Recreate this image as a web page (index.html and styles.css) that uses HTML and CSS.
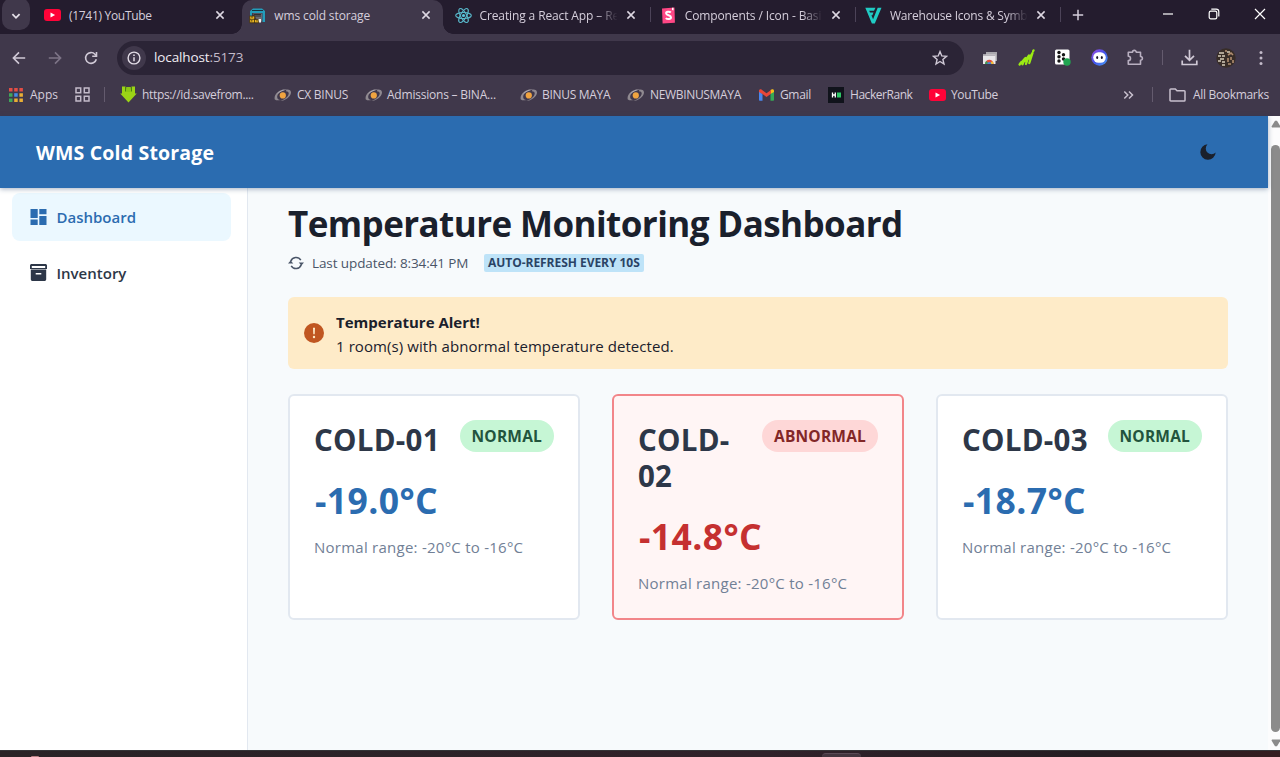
FILE: index.html
```html
<!DOCTYPE html>
<html lang="en">
<head>
<meta charset="utf-8">
<title>wms cold storage</title>
<link rel="stylesheet" href="styles.css">
</head>
<body>
<svg class="defs" width="0" height="0" aria-hidden="true">
  <symbol id="yt" viewBox="0 0 17 12"><rect width="17" height="12" rx="3" fill="#ff0338"/><path d="M6.5 3.6v4.8l4.6-2.4z" fill="#fff"/></symbol>
  <symbol id="x" viewBox="0 0 10 10"><path d="M1.4 1.4l7.2 7.2M8.6 1.4L1.4 8.6" stroke="currentColor" stroke-width="1.5" fill="none"/></symbol>
  <symbol id="binus" viewBox="0 0 18 16"><path d="M.8 12.5C-.6 8 4.5 2.5 11 2.2 7 3.5 3.5 6.500 3.200 9.500c-.2 2 1 3 3 3.600-2 .4-4.400.3-5.400-.6z" fill="#8f8990"/><path d="M12.500 2.400c3-.2 4.700 1 4.500 3.300-.4 4-5.500 8-11 8.300 4.500-1.200 8.300-4.400 8.700-7.200.2-1.600-.8-2.500-2.800-2.600z" fill="#8f8990"/><path d="M3 7.500C5 4.200 9 2.300 13 2.600c-3.500.6-7 2.300-10 4.900z" fill="#bdb8be"/><circle cx="8.800" cy="8.400" r="3.100" fill="#f0a440"/></symbol>
</svg>

<div class="browser">
  <div class="tabstrip">
    <button class="tab-search"><svg width="10" height="7" viewBox="0 0 10 7"><path d="M1.4 1.2L5 4.8l3.6-3.6" fill="none" stroke="#e4dfe8" stroke-width="1.8"/></svg></button>
    <div class="tab">
      <svg class="fav" width="17" height="12"><use href="#yt"/></svg>
      <span class="title t1">(1741) YouTube</span>
      <svg class="close" width="10" height="10"><use href="#x"/></svg>
    </div>
    <div class="tab active">
      <svg class="fav" width="17" height="17" viewBox="0 0 17 17"><path d="M1 4l3-2.5h9L16 4v11h-2.5V6H3v4H1z" fill="#239cba"/><path d="M3 3.5h11" stroke="#17343f" stroke-width="1"/><path d="M4 6.5h9v8H9z" fill="#6b6a73"/><path d="M5 7.5h7M5 9h7" stroke="#222" stroke-width=".8"/><path d="M.7 9h5v3.4h4v3.4h-9z" fill="#e7b322" stroke="#3b2c10" stroke-width=".8"/><path d="M1 12.3h5M5.5 12v4M3 9v2M2.8 13v1.6M8 13v1.5" stroke="#3b2c10" stroke-width=".8"/><path d="M9.5 12h2.5v3.5h-2z" fill="#f2f0ef"/></svg>
      <span class="title t2">wms cold storage</span>
      <svg class="close" width="10" height="10"><use href="#x"/></svg>
    </div>
    <div class="tab">
      <svg class="fav" width="17" height="17" viewBox="0 0 17 17"><g fill="none" stroke="#58b7ca" stroke-width="1.1"><ellipse cx="8.5" cy="8.5" rx="7.8" ry="3"/><ellipse cx="8.5" cy="8.5" rx="7.8" ry="3" transform="rotate(60 8.5 8.5)"/><ellipse cx="8.5" cy="8.5" rx="7.8" ry="3" transform="rotate(120 8.5 8.5)"/></g><circle cx="8.5" cy="8.5" r="1.6" fill="#58c4dc"/></svg>
      <span class="title fade t3">Creating a React App – Re</span>
      <svg class="close" width="10" height="10"><use href="#x"/></svg>
    </div>
    <div class="tab divided">
      <svg class="fav" width="17" height="17" viewBox="0 0 17 17"><path d="M2 1.5L14.5.5l.4 15.2-12.3.8z" fill="#ff4785"/><path d="M10.8 5.5C9.5 4.2 6 4.3 6.1 6.3c.1 2.4 4.9 1.4 4.9 4 0 2.3-3.8 2.2-5.2.8" fill="none" stroke="#fff" stroke-width="2"/><path d="M12 .8h1.5v2.7l-.8-.6-.7.6z" fill="#fff"/></svg>
      <span class="title fade t4">Components / Icon - Basi</span>
      <svg class="close" width="10" height="10"><use href="#x"/></svg>
    </div>
    <div class="tab divided last">
      <svg class="fav" width="17" height="17" viewBox="0 0 17 17"><path d="M.3.7h10.2L9 3.7H4.2L5 5.5h3.5L7.4 8.2h-1l1.700 4L12.700.700h3.800L9.800 16.500H6.900z" fill="#20cbc4"/></svg>
      <span class="title fade t5">Warehouse Icons &amp; Symb</span>
      <svg class="close" width="10" height="10"><use href="#x"/></svg>
    </div>
    <svg class="newtab" width="12" height="12" viewBox="0 0 12 12"><path d="M6 .8v10.4M.8 6h10.4" stroke="#d5cedb" stroke-width="1.5"/></svg>
    <div class="window-controls">
      <svg width="12" height="12" viewBox="0 0 12 12"><path d="M1 6h10" stroke="#fff" stroke-width="1.2"/></svg>
      <svg width="12" height="12" viewBox="0 0 12 12" fill="none" stroke="#fff" stroke-width="1.2"><rect x="1.2" y="3.2" width="7.6" height="7.6" rx="1.6"/><path d="M3.3 1.2h4.9a2.6 2.6 0 0 1 2.6 2.6v4.6"/></svg>
      <svg width="12" height="12" viewBox="0 0 12 12"><path d="M1 1l10 10M11 1L1 11" stroke="#fff" stroke-width="1.2"/></svg>
    </div>
  </div>

  <div class="toolbar">
    <div class="nav-buttons">
      <svg width="14" height="14" viewBox="0 0 14 14" fill="none" stroke="#d0c9d6" stroke-width="1.6"><path d="M13.2 7H1.6M7 1.4L1.4 7 7 12.6"/></svg>
      <svg width="14" height="14" viewBox="0 0 14 14" fill="none" stroke="#7d7487" stroke-width="1.6"><path d="M.8 7h11.6M7 1.4L12.6 7 7 12.6"/></svg>
      <svg width="14" height="14" viewBox="0 0 14 14" fill="none" stroke="#d0c9d6" stroke-width="1.6"><path d="M12.3 8.2A5.4 5.4 0 1 1 11 3.3l1.3 1.3"/><path d="M12.5.9v4.3H8.2"/></svg>
    </div>
    <div class="omnibox">
      <span class="site-info"><svg width="14" height="14" viewBox="0 0 14 14"><circle cx="7" cy="7" r="5.9" fill="none" stroke="#e2dce6" stroke-width="1.4"/><path d="M7 6.2v4M7 3.6v1.5" stroke="#e2dce6" stroke-width="1.5"/></svg></span>
      <span class="url">localhost<i>:5173</i></span>
      <svg class="star" width="16" height="16" viewBox="0 0 16 16"><path d="M8 1.6l1.8 4.3 4.7.4-3.6 3.1 1.1 4.6L8 11.5 4 14l1.1-4.6-3.6-3.1 4.7-.4z" fill="none" stroke="#d0c9d6" stroke-width="1.4"/></svg>
    </div>
    <div class="extensions">
      <svg width="16" height="16" viewBox="0 0 16 16"><path d="M4 2h11v9H4z" fill="#aaa8ae"/><path d="M1 4.500h12.500v9.500H1z" fill="#e9e7ea"/><path d="M1 4.500h12.500V6H1z" fill="#b8b5bb"/><path d="M3 14a4.300 4.300 0 0 1 8.600 0z" fill="#df4c3d"/><path d="M3 14a4.300 4.300 0 0 1 1.300-3L7.300 14z" fill="#3e9e57"/><path d="M11.600 14a4.300 4.300 0 0 0-1.300-3l-3 3z" fill="#f1bd35"/><path d="M5.300 14a2 2 0 0 1 4 0z" fill="#4783d9"/></svg>
      <svg width="17" height="17" viewBox="0 0 17 17" fill="none" stroke="#9bea13" stroke-width="2.300" stroke-linecap="round"><path d="M1.600 15.500l1.600-2.300M4.500 15.300l2.200-5.500M8 15l2.600-7.800M11.300 14l3.200-10M15.200 2l.3-.6M3.500 13.500l4-4.500M7.300 12L11 6.500M11 9.500L14.500 4"/></svg>
      <svg width="17" height="17" viewBox="0 0 17 17"><rect x="1" y=".5" width="14.500" height="15" rx="1.500" fill="#fff"/><g fill="#151515"><circle cx="5" cy="3.500" r="1.700"/><circle cx="5" cy="7.800" r="1.700"/><circle cx="5" cy="12" r="1.700"/><circle cx="9.500" cy="5.800" r="1.700"/><circle cx="9.500" cy="10" r="1.700"/></g><circle cx="13" cy="13" r="3.700" fill="#21a551"/></svg>
      <svg width="17" height="17" viewBox="0 0 17 17"><defs><linearGradient id="ring" x1="0" y1="0" x2="1" y2="1"><stop stop-color="#a14be0"/><stop offset=".5" stop-color="#4252ec"/><stop offset="1" stop-color="#4aa3f5"/></linearGradient></defs><circle cx="8.500" cy="8.500" r="8.200" fill="url(#ring)"/><rect x="2.200" y="3.300" width="12.600" height="10.400" rx="5.200" fill="#fff"/><ellipse cx="6.200" cy="8.500" rx="1" ry="1.600" fill="#171328"/><ellipse cx="10.800" cy="8.500" rx="1" ry="1.600" fill="#171328"/></svg>
      <svg width="17" height="17" viewBox="0 0 17 17"><path d="M1.300 3.300h4.200a1.800 1.800 0 0 1 3.800 0h4.200v4.200a1.800 1.800 0 0 1 0 3.800v4H1.300v-3.700a2.200 2.200 0 0 0 0-4.400z" fill="none" stroke="#b9b0c1" stroke-width="1.600" stroke-linejoin="round"/></svg>
      <span class="rule ext-rule"></span>
      <svg width="17" height="17" viewBox="0 0 17 17" fill="none" stroke="#d0c9d6" stroke-width="1.700"><path d="M8.500.8v10M4 6.800l4.500 4.500L13 6.800M1.200 11.500v4h14.600v-4"/></svg>
      <svg class="avatar" width="20" height="20" viewBox="0 0 20 20"><circle cx="10" cy="10" r="9.700" fill="#382d28"/><path d="M3 5h5M11 4h3M2 8h3M6 8h3M4 11h4M2 13h3M6 14h3M6 17h3" stroke="#d5cbb9" stroke-width="1.500"/><path d="M12 7l3-2 2 2M12 10v4M15 9v3M17 12v3M12 16h3M10 2v2" fill="none" stroke="#b18e70" stroke-width="1.600"/></svg>
      <svg class="menu" width="4" height="16" viewBox="0 0 4 16" fill="#c3bbca"><circle cx="2" cy="2.500" r="1.500"/><circle cx="2" cy="8" r="1.500"/><circle cx="2" cy="13.500" r="1.500"/></svg>
    </div>
  </div>

  <div class="bookmarks">
    <svg width="14" height="14" viewBox="0 0 14 14"><path d="M0 0h3.500v3.500H0zM5.200 0h3.500v3.500H5.200zM10.400 0h3.500v3.500h-3.500z" fill="#e34e45"/><path d="M0 5.200h3.500v3.500H0zM0 10.400h3.500v3.500H0z" fill="#3fa65b"/><path d="M5.200 5.200h3.500v3.500H5.200z" fill="#458ce8"/><path d="M10.400 5.200h3.500v3.500h-3.500zM5.200 10.400h3.500v3.500H5.200zM10.400 10.400h3.500v3.500h-3.500z" fill="#e9ae35"/></svg>
    <span class="b-text k1">Apps</span>
    <svg class="b-grid" width="15" height="15" viewBox="0 0 15 15" fill="none" stroke="#c3bbca" stroke-width="1.500"><path d="M1 1h4.700v4.700H1zM9.300 1H14v4.700H9.300zM1 9.300h4.700V14H1zM9.300 9.300H14V14H9.300z"/></svg>
    <span class="rule b-rule"></span>
    <svg class="b-save" width="17" height="17" viewBox="0 0 17 17"><path d="M2 .5h3.500v2h6v-2H15v7h1.800L8.500 16.500.2 7.500H2z" fill="#9bd416"/><path d="M5.600 1v4.500M11.400 1v4.500" stroke="#4a7f12" stroke-width="1.200"/><path d="M6.200 1h4.600v5H6.200z" fill="#8cc714"/></svg>
    <span class="b-text k2">https://id.savefrom....</span>
    <svg class="b-binus1" width="18" height="16"><use href="#binus"/></svg>
    <span class="b-text k3">CX BINUS</span>
    <svg class="b-binus2" width="18" height="16"><use href="#binus"/></svg>
    <span class="b-text k4">Admissions – BINA...</span>
    <svg class="b-binus3" width="18" height="16"><use href="#binus"/></svg>
    <span class="b-text k5">BINUS MAYA</span>
    <svg class="b-binus4" width="18" height="16"><use href="#binus"/></svg>
    <span class="b-text k6">NEWBINUSMAYA</span>
    <svg class="b-gmail" width="15" height="12" viewBox="0 0 15 12"><path d="M0 2v8.800c0 .6.400 1 1 1h2.500V5z" fill="#4886ee"/><path d="M15 2v8.800c0 .6-.4 1-1 1h-2.500V5z" fill="#35a856"/><path d="M11.500 5V1L13 .3c1-.5 2 .3 2 1.400V3z" fill="#f6bd1a"/><path d="M0 3V1.700C0 .4 1.500-.2 2.500.5L7.500 4.300 12 .9v3.800l-4.500 3.400-4-3z" fill="#e84738"/></svg>
    <span class="b-text k7">Gmail</span>
    <svg class="b-hr" width="16" height="16" viewBox="0 0 16 16"><path d="M0 0h16v16H0z" fill="#10131b"/><path d="M4.500 5.500v5M7.300 5.500v5M4.500 8h3" stroke="#fff" stroke-width="1.300"/><path d="M9 5.500h4v5H9z" fill="#2ec866"/></svg>
    <span class="b-text k8">HackerRank</span>
    <svg class="b-yt" width="17" height="12"><use href="#yt"/></svg>
    <span class="b-text k9">YouTube</span>
    <svg class="b-more" width="11" height="10" viewBox="0 0 11 10" fill="none" stroke="#c8c0ce" stroke-width="1.500"><path d="M1.300 1.500L4.800 5 1.300 8.500M6 1.500L9.500 5 6 8.500"/></svg>
    <span class="rule b-rule2"></span>
    <svg class="b-folder" width="17" height="14" viewBox="0 0 17 14"><path d="M1 12.200V1.800c0-.4.300-.8.800-.8h4.500L8 2.800h7.200c.5 0 .8.400.8.800v8.600c0 .4-.3.800-.8.800H1.800c-.5 0-.8-.4-.8-.8z" fill="none" stroke="#c8c0ce" stroke-width="1.500"/></svg>
    <span class="b-text k10">All Bookmarks</span>
  </div>
</div>

<div class="viewport">
  <div class="app">
    <header class="app-header">
      <span class="brand">WMS Cold Storage</span>
      <svg class="moon" width="16" height="16" viewBox="0 0 16 16"><path d="M7.500.300A7.700 7.700 0 1 0 15.700 8.600 4.900 4.900 0 1 1 7.500.300z" fill="#1a202c"/></svg>
    </header>
    <div class="app-body">
      <nav class="sidebar">
        <a class="nav-item selected"><svg width="17" height="16" viewBox="0 0 17 16" fill="currentColor"><path d="M.5 0h7.200v9H.5zM9.300 0h7.200v5.300H9.300zM.5 10.600h7.200V16H.5zM9.300 7h7.200v9H9.300z"/></svg><span class="n1">Dashboard</span></a>
        <a class="nav-item"><svg width="17" height="17" viewBox="0 0 17 17"><path d="M1.700 0h13.600C16.300 0 17 .7 17 1.600V5H0V1.600C0 .7.700 0 1.700 0zM.8 5.500h15.400v9.700c0 1-.8 1.800-1.800 1.800H2.600c-1 0-1.800-.8-1.800-1.800z" fill="currentColor"/><path d="M1.800 2h13.400v1.900H1.800zM5.700 9h5.600v1.500H5.700z" fill="#fff"/></svg><span class="n2">Inventory</span></a>
      </nav>
      <main class="content">
        <h1>Temperature Monitoring Dashboard</h1>
        <div class="status">
          <svg width="16" height="14" viewBox="0 0 16 14"><path d="M2.800 5.300A5.500 5.500 0 0 1 12.800 4.200M13.200 8.700A5.500 5.500 0 0 1 3.200 9.800" fill="none" stroke="#4a5568" stroke-width="1.500"/><path d="M10.700 6.600H16L13.400 9.400zM0 7.500h5.300L2.600 4.600z" fill="#4a5568"/></svg>
          <span class="updated">Last updated: 8:34:41 PM</span>
          <span class="refresh">AUTO-REFRESH EVERY 10S</span>
        </div>
        <div class="alert">
          <svg width="20" height="20" viewBox="0 0 20 20"><circle cx="10" cy="10" r="10" fill="#c05621"/><path d="M9 4.800h2l-.3 6.500H9.300z" fill="#feebc8"/><circle cx="10" cy="14" r="1.200" fill="#feebc8"/></svg>
          <div class="alert-text"><strong>Temperature Alert!</strong><span>1 room(s) with abnormal temperature detected.</span></div>
        </div>
        <div class="cards">
          <section class="card">
            <div class="card-head"><h2>COLD-01</h2><span class="badge">NORMAL</span></div>
            <div class="temp">-19.0°C</div>
            <div class="range">Normal range: -20°C to -16°C</div>
          </section>
          <section class="card abnormal">
            <div class="card-head"><h2>COLD-<br>02</h2><span class="badge">ABNORMAL</span></div>
            <div class="temp">-14.8°C</div>
            <div class="range">Normal range: -20°C to -16°C</div>
          </section>
          <section class="card">
            <div class="card-head"><h2>COLD-03</h2><span class="badge">NORMAL</span></div>
            <div class="temp">-18.7°C</div>
            <div class="range">Normal range: -20°C to -16°C</div>
          </section>
        </div>
      </main>
    </div>
  </div>
  <div class="scrollbar">
    <svg width="10" height="8" viewBox="0 0 10 8"><path d="M4 .8h2L9.500 6.500l-.5 1H1l-.5-1z" fill="#8b8b8b"/></svg>
    <span class="thumb"></span>
    <svg width="10" height="8" viewBox="0 0 10 8"><path d="M4 7.200h2L9.500 1.500 9 .5H1l-.5 1z" fill="#8b8b8b"/></svg>
  </div>
</div>
<div class="taskbar"><span class="task-dot"></span><span class="task-tile"></span></div>
</body>
</html>
```
FILE: styles.css
```css
* { box-sizing: border-box; }
body { margin: 0; width: 1280px; height: 757px; overflow: hidden; display: flex; flex-direction: column; font-family: "Open Sans", "Noto Sans", sans-serif; font-size: 15px; background: #fff; }
.defs { position: absolute; }
svg { display: block; flex: none; }
h1, h2 { margin: 0; }
span, strong, h1, h2 { white-space: nowrap; }

/* Browser frame */
.browser { height: 116px; flex: none; background: #40384b; color: #d5cedb; font-size: 12px; }
.tabstrip { height: 34px; background: #241c2e; display: flex; align-items: center; }
.tab-search { width: 28px; height: 32px; margin: -6px 7px 0 2px; padding: 4px 0 0; border: 0; border-radius: 10px; background: #40384b; display: flex; align-items: center; justify-content: center; }
.tab { width: 205.25px; height: 34px; flex: none; display: flex; align-items: center; padding: 0 17px 4px 7px; position: relative; }
.tab.active { width: 200.25px; margin-right: 5px; padding-right: 12px; background: #40384b; border-radius: 10px 10px 0 0; }
.tab.active::before, .tab.active::after { content: ""; position: absolute; bottom: 0; width: 10px; height: 10px; }
.tab.active::before { left: -10px; background: radial-gradient(circle at 0 0, transparent 9.5px, #40384b 10px); }
.tab.active::after { right: -10px; background: radial-gradient(circle at 100% 0, transparent 9.5px, #40384b 10px); }
.tab.divided::before, .tab.last::after { content: ""; position: absolute; left: -3px; top: 7px; width: 1px; height: 15px; background: #4c4358; }
.tab.last::after { left: auto; right: 2px; }
.title { flex: 1; min-width: 0; margin: 2px 7px 0 8px; line-height: 18px; letter-spacing: -0.12px; }
.title.t1 { letter-spacing: -0.3px; }
.title.t5 { letter-spacing: -0.22px; }
.title.fade { -webkit-mask-image: linear-gradient(90deg, #000 84%, transparent 99%); mask-image: linear-gradient(90deg, #000 84%, transparent 99%); }
.close { color: #ded8e3; }
.newtab { margin: -4px 0 0 8.5px; }
.window-controls { margin: -6px 14px 0 auto; display: flex; gap: 34px; }
.toolbar { height: 47px; display: flex; align-items: center; }
.nav-buttons { display: flex; gap: 22px; padding-left: 12px; width: 117px; }
.omnibox { width: 847px; height: 34px; border-radius: 17px; background: #2b2436; display: flex; align-items: center; padding: 0 16px 0 5px; }
.site-info { width: 24px; height: 24px; border-radius: 50%; background: #40384b; display: flex; align-items: center; justify-content: center; }
.url { margin: -1px 0 0 8px; font-size: 13.5px; letter-spacing: -0.12px; color: #f0ecf3; }
.url i { font-style: normal; color: #c3bbca; }
.star { margin-left: auto; }
.extensions { display: flex; align-items: center; gap: 19.5px; padding-left: 18px; }
.rule { width: 1px; height: 15px; background: #645b6e; flex: none; }
.ext-rule { margin: 0 -1px 0 -2px; }
.avatar { margin-left: -2px; }
.menu { margin-left: 4px; }
.bookmarks { height: 35px; display: flex; align-items: center; padding: 0 11px 8px 9px; }
.b-text { flex: none; }
.k1 { margin-left: 7px; width: 28px; }
.b-grid { margin-left: 17px; }
.b-rule { margin-left: 14px; }
.b-save { margin-left: 15px; }
.k2 { margin-left: 5px; width: 112px; letter-spacing: -0.34px; }
.b-binus1 { margin-left: 20px; }
.k3 { margin-left: 5px; width: 52px; letter-spacing: -0.25px; }
.b-binus2 { margin-left: 16px; }
.k4 { margin-left: 4px; width: 110px; letter-spacing: -0.22px; }
.b-binus3 { margin-left: 23px; }
.k5 { margin-left: 4px; width: 69px; letter-spacing: -0.3px; }
.b-binus4 { margin-left: 16px; }
.k6 { margin-left: 5px; width: 92px; letter-spacing: -0.33px; }
.b-gmail { margin-left: 17px; }
.k7 { margin-left: 6px; width: 31px; letter-spacing: -0.35px; }
.b-hr { margin-left: 17px; }
.k8 { margin-left: 6px; width: 63px; letter-spacing: -0.45px; }
.b-yt { margin-left: 16px; }
.k9 { margin-left: 5px; width: 47px; letter-spacing: -0.35px; }
.b-more { margin-left: auto; }
.b-rule2 { margin-left: 18px; }
.b-folder { margin-left: 16px; }
.k10 { margin-left: 7px; width: 76px; letter-spacing: -0.32px; }

/* Page */
.viewport { height: 634px; flex: none; display: flex; }
.app { width: 1268px; display: flex; flex-direction: column; background: #f7fafc; }
.app-header { height: 72px; flex: none; background: #2b6cb0; box-shadow: 0 1px 5px rgba(30, 60, 100, .4); display: flex; align-items: center; justify-content: space-between; padding: 0 52px 0 36px; z-index: 1; }
.brand { color: #fff; font-size: 19.5px; font-weight: 700; letter-spacing: 0.18px; }
.app-body { flex: 1; display: flex; min-height: 0; }
.sidebar { width: 248px; background: #fff; border-right: 1px solid #e2e8f0; padding: 5px 16px 0 12px; display: flex; flex-direction: column; gap: 8px; }
.nav-item { height: 48px; border-radius: 8px; display: flex; align-items: center; gap: 9.5px; padding-left: 18px; color: #2d3748; font-weight: 600; }
.nav-item.selected { background: #ebf8ff; color: #2b6cb0; }
.nav-item svg { margin-top: -1px; }
.content { flex: 1; padding: 14px 40px 0; }
h1 { font-size: 35px; line-height: 43px; color: #1a202c; font-weight: 700; letter-spacing: -0.58px; }
.status { height: 20px; margin-top: 8px; display: flex; align-items: center; color: #4a5568; font-size: 13.5px; }
.updated { margin-left: 8px; width: 156px; letter-spacing: -0.1px; }
.refresh { margin-left: 16px; width: 160px; height: 18px; line-height: 17px; border-radius: 2px; padding-left: 4px; background: #bee3f8; color: #2a4365; font-size: 12px; font-weight: 700; letter-spacing: -0.04px; }
.alert { height: 72px; margin-top: 24px; padding: 0 16px; background: #feebc8; border-radius: 6px; display: flex; align-items: center; gap: 12px; color: #1a202c; }
.alert-text { display: flex; flex-direction: column; line-height: 24px; padding-top: 2px; letter-spacing: 0.08px; }
.alert-text strong { letter-spacing: 0; }
.cards { margin-top: 25px; display: grid; grid-template-columns: repeat(3, 1fr); gap: 32px; }
.card { height: 226px; min-width: 0; border: 2px solid #e2e8f0; border-radius: 6px; background: #fff; padding: 24px; }
.card.abnormal { background: #fff5f5; border-color: #f28589; }
.card-head { display: flex; justify-content: space-between; align-items: flex-start; }
h2 { font-size: 29.5px; line-height: 36px; padding-top: 2px; margin-bottom: -2px; color: #2d3748; font-weight: 700; letter-spacing: 0.25px; }
.badge { height: 32px; line-height: 33px; border-radius: 16px; padding: 0 12px; background: #c6f6d5; color: #22543d; font-size: 15.5px; font-weight: 700; letter-spacing: 0.2px; }
.abnormal .badge { background: #fed7d7; color: #822727; }
.temp { margin-top: 16px; font-size: 35.5px; line-height: 54px; padding: 1px 0 0 1px; margin-bottom: -1px; color: #2b6cb0; font-weight: 700; white-space: nowrap; letter-spacing: 0.4px; }
.abnormal .temp { color: #c53030; }
.range { margin-top: 8px; line-height: 24px; padding-top: 1px; color: #718096; white-space: nowrap; letter-spacing: 0.25px; }

.scrollbar { width: 12px; background: #fcfcfd; display: flex; flex-direction: column; align-items: flex-end; padding: 4px 0 3px; }
.scrollbar svg { margin-right: -1px; }
.thumb { flex: 1; width: 9px; margin: 17px 0 7px; border-radius: 5px; background: #8b8b8b; }
.taskbar { height: 7px; background: linear-gradient(90deg, #292326, #30222a 60%, #241d22 85%, #351d20); border-top: 1px solid #343437; position: relative; }
.task-dot { position: absolute; left: 31px; bottom: 0; width: 8px; height: 1px; background: #b77f83; border-radius: 4px 4px 0 0; }
.task-tile { position: absolute; left: 822px; bottom: 0; width: 39px; height: 4px; border-radius: 4px 4px 0 0; background: #43363f; border-top: 1px solid #5a4b56; }
```
